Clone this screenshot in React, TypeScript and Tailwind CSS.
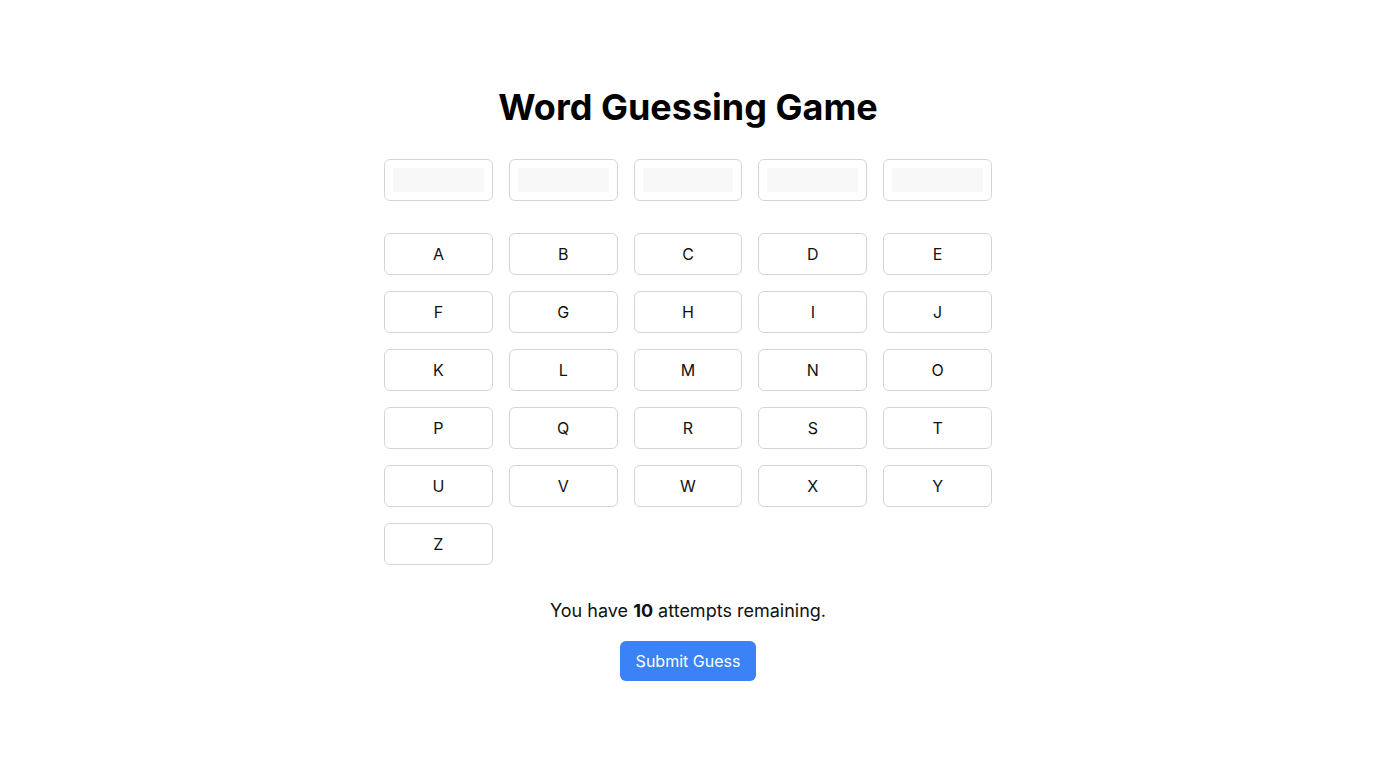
const letters = "ABCDEFGHIJKLMNOPQRSTUVWXYZ".split("");

export default function App() {
  const attempts = 10;

  return (
    <div
      className="min-h-screen bg-white flex flex-col items-center justify-center text-[#111]"
      style={{ fontFamily: "Inter, 'Noto Sans', sans-serif" }}
    >
      <h1 className="text-4xl font-bold text-black mb-8">Word Guessing Game</h1>

      {/* word slots */}
      <div className="grid grid-cols-5 gap-4 w-[608px] mb-8">
        {[0, 1, 2, 3, 4].map((i) => (
          <div key={i} className="h-[42px] border border-gray-300 rounded-md p-2">
            <div className="h-[24px] bg-[#f8f8f8]"></div>
          </div>
        ))}
      </div>

      {/* alphabet */}
      <div className="grid grid-cols-5 gap-4 w-[608px]">
        {letters.map((l) => (
          <button
            key={l}
            className="h-[42px] border border-gray-300 rounded-md bg-white text-base text-[#111]"
          >
            {l}
          </button>
        ))}
      </div>

      <p className="text-lg mt-8 text-[#111]">
        You have <span className="font-bold">{attempts}</span> attempts remaining.
      </p>

      <button className="mt-4 px-4 py-2 bg-[#3b82f6] text-white rounded-md text-base">
        Submit Guess
      </button>
    </div>
  );
}
